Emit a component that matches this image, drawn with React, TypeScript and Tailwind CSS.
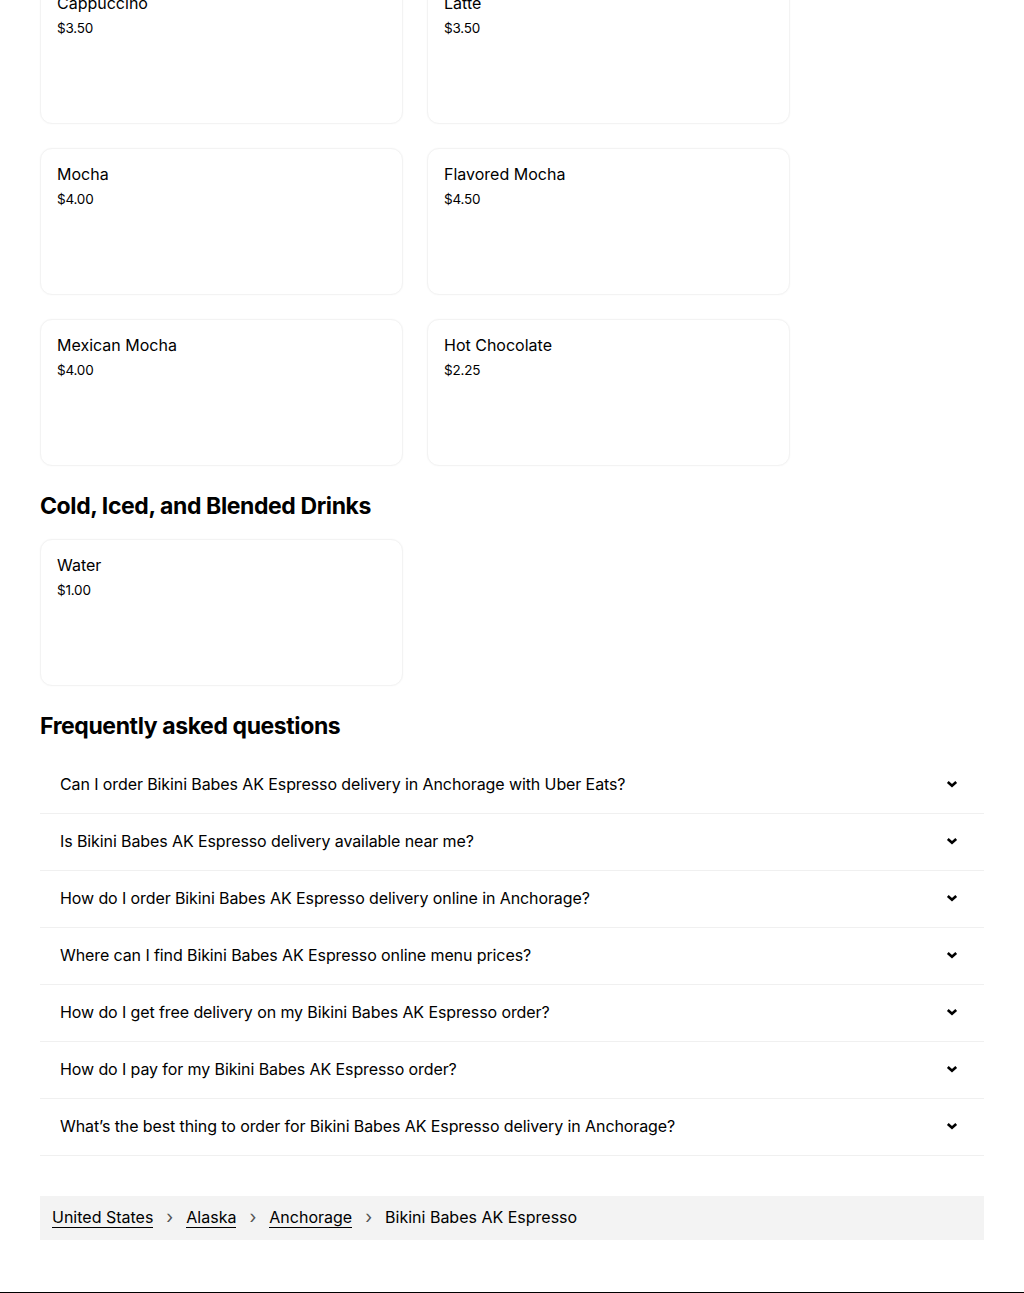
const font = { fontFamily: "Inter, 'Noto Sans', sans-serif" };

type Item = { name: string; price: string };

const rows: Item[][] = [
  [
    { name: "Cappuccino", price: "$3.50" },
    { name: "Latte", price: "$3.50" },
  ],
  [
    { name: "Mocha", price: "$4.00" },
    { name: "Flavored Mocha", price: "$4.50" },
  ],
  [
    { name: "Mexican Mocha", price: "$4.00" },
    { name: "Hot Chocolate", price: "$2.25" },
  ],
];

const faqs = [
  "Can I order Bikini Babes AK Espresso delivery in Anchorage with Uber Eats?",
  "Is Bikini Babes AK Espresso delivery available near me?",
  "How do I order Bikini Babes AK Espresso delivery online in Anchorage?",
  "Where can I find Bikini Babes AK Espresso online menu prices?",
  "How do I get free delivery on my Bikini Babes AK Espresso order?",
  "How do I pay for my Bikini Babes AK Espresso order?",
  "What’s the best thing to order for Bikini Babes AK Espresso delivery in Anchorage?",
];

function Card({ item }: { item: Item }) {
  return (
    <div className="h-[147px] rounded-xl border border-[#f3f3f3] bg-white px-4 pt-[15px] shadow-[0_0_2px_rgba(0,0,0,0.04)]">
      <div className="text-[16px] leading-5 text-black">{item.name}</div>
      <div className="mt-[5px] text-[13.5px] leading-5 tracking-[-0.2px] text-black">{item.price}</div>
    </div>
  );
}

function Chevron() {
  return (
    <svg width="12" height="8" viewBox="0 0 12 8" fill="none">
      <path d="M1.8 2 6 5.8 10.2 2" stroke="#000" strokeWidth="2.6" strokeLinecap="butt" />
    </svg>
  );
}

function Sep() {
  return <span className="px-[13px] text-[18px] leading-5 text-[#545454]">›</span>;
}

export default function App() {
  return (
    <div className="min-h-[1293px] overflow-hidden bg-white text-black" style={font}>
      <div className="px-10">
        <div className="-mt-[23px] flex w-[750px] flex-col gap-6">
          {rows.map((r, i) => (
            <div key={i} className="grid grid-cols-2 gap-6">
              {r.map((it) => (
                <Card key={it.name} item={it} />
              ))}
            </div>
          ))}
        </div>

        <h2 className="mt-6 mb-[17px] h-8 text-[23px] font-bold leading-8 tracking-[-0.4px]">
          Cold, Iced, and Blended Drinks
        </h2>
        <div className="grid w-[750px] grid-cols-2 gap-6">
          <Card item={{ name: "Water", price: "$1.00" }} />
        </div>

        <h2 className="mt-6 h-8 text-[23px] font-bold leading-8 tracking-[-0.4px]">
          Frequently asked questions
        </h2>
        <div className="mt-[15px]">
          {faqs.map((q) => (
            <div
              key={q}
              className="flex h-[57px] items-center justify-between border-b border-[#f0f0f0] pb-[2px] pl-5 pr-[26px]"
            >
              <span className="text-[16px] leading-6 tracking-[-0.1px]">{q}</span>
              <Chevron />
            </div>
          ))}
        </div>

        <nav className="mt-10 flex h-[44px] items-center bg-[#f3f3f3] px-3 pb-[2px] text-[16px]">
          <a className="border-b border-black leading-5">United States</a>
          <Sep />
          <a className="border-b border-black leading-5">Alaska</a>
          <Sep />
          <a className="border-b border-black leading-5">Anchorage</a>
          <Sep />
          <span className="leading-5">Bikini Babes AK Espresso</span>
        </nav>
      </div>
      <div className="mt-[52px] h-8 border-t border-black" />
    </div>
  );
}
